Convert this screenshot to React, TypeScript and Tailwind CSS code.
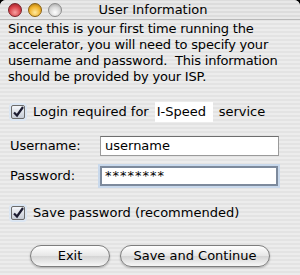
import React from 'react'

function Light({ color }: { color: 'red' | 'yellow' | 'gray' }) {
    const cls =
        color === 'red'
            ? 'bg-[radial-gradient(circle_at_50%_70%,#f7a0a0_0%,#d8424a_55%,#8e1c24_100%)] border-[#7a2028]'
            : color === 'yellow'
            ? 'bg-[radial-gradient(circle_at_50%_70%,#ffe9a0_0%,#f0b22a_55%,#9a6a10_100%)] border-[#8a6010]'
            : 'bg-[radial-gradient(circle_at_50%_70%,#ffffff_0%,#d6d6d6_55%,#9a9a9a_100%)] border-[#8c8c8c]'
    return <div className={`size-[14px] rounded-full border ${cls}`} />
}

function Check() {
    return (
        <div className="size-[14px] border border-[#6b6b6b] bg-[linear-gradient(#f4f6fa,#c6ccd6)] rounded-[2px] flex items-center justify-center shadow-[0_0_0_2px_#dbe6f3]">
            <svg width="12" height="12" viewBox="0 0 12 12">
                <path d="M2 6.5 L5 9.5 L11 1" fill="none" stroke="#1b1b30" strokeWidth="2.2" />
            </svg>
        </div>
    )
}

function Button({ label, w }: { label: string; w: string }) {
    return (
        <div
            className={`${w} h-[22px] rounded-full border border-[#7d7d7d] bg-[linear-gradient(#ffffff,#e6e6e6_50%,#d4d4d4_51%,#f7f7f7)] flex items-center justify-center text-[13px] text-black shadow-[0_1px_2px_rgba(0,0,0,0.25)]`}
        >
            {label}
        </div>
    )
}

export default function App() {
    return (
        <div className="w-[300px] h-[275px] overflow-hidden bg-black font-['DejaVu_Sans',sans-serif] text-black">
            <div className="w-full h-full rounded-t-[6px] overflow-hidden flex flex-col bg-[repeating-linear-gradient(0deg,#ececec_0px,#ececec_2px,#e3e3e3_2px,#e3e3e3_4px)]">
                {/* title bar */}
                <div className="h-[20px] flex items-center relative border-b border-[#b8b8b8] bg-[repeating-linear-gradient(0deg,#e8e8e8_0px,#e8e8e8_2px,#dcdcdc_2px,#dcdcdc_4px)]">
                    <div className="flex gap-[6px] pl-[8px]">
                        <Light color="red" />
                        <Light color="yellow" />
                        <Light color="gray" />
                    </div>
                    <div className="absolute inset-0 flex items-center justify-center text-[13px] pl-[6px]">User Information</div>
                </div>

                <div className="px-[8px] pt-[1px] text-[13px] leading-[16px] tracking-[-0.2px]">
                    Since this is your first time running the accelerator, you will need to specify your username and password.&nbsp; This information should be provided by your ISP.
                </div>

                <div className="flex items-center mt-[18px] pl-[11px] text-[13px] h-[18px]">
                    <Check />
                    <span className="ml-[8px]">Login required for</span>
                    <span className="ml-[6px] bg-white px-[2px] w-[58px]">I-Speed</span>
                    <span className="ml-[6px]">service</span>
                </div>

                <div className="flex items-center mt-[15px] text-[13px] h-[20px]">
                    <span className="pl-[10px] w-[100px]">Username:</span>
                    <div className="w-[179px] h-[20px] bg-white border border-[#9a9a9a] border-t-[#6e6e6e] pl-[4px] flex items-center">username</div>
                </div>

                <div className="flex items-center mt-[10px] text-[13px] h-[20px]">
                    <span className="pl-[10px] w-[100px]">Password:</span>
                    <div className="w-[178px] h-[20px] bg-white border-2 border-[#7d8a9c] pl-[3px] flex items-center shadow-[0_0_0_2px_#c9d9ec] tracking-[1px]">********</div>
                </div>

                <div className="flex items-center mt-[18px] pl-[11px] text-[13px] h-[18px]">
                    <Check />
                    <span className="ml-[8px]">Save password (recommended)</span>
                </div>

                <div className="flex mt-[23px] pl-[30px] gap-[10px]">
                    <Button label="Exit" w="w-[80px]" />
                    <Button label="Save and Continue" w="w-[150px]" />
                </div>
            </div>
        </div>
    )
}
